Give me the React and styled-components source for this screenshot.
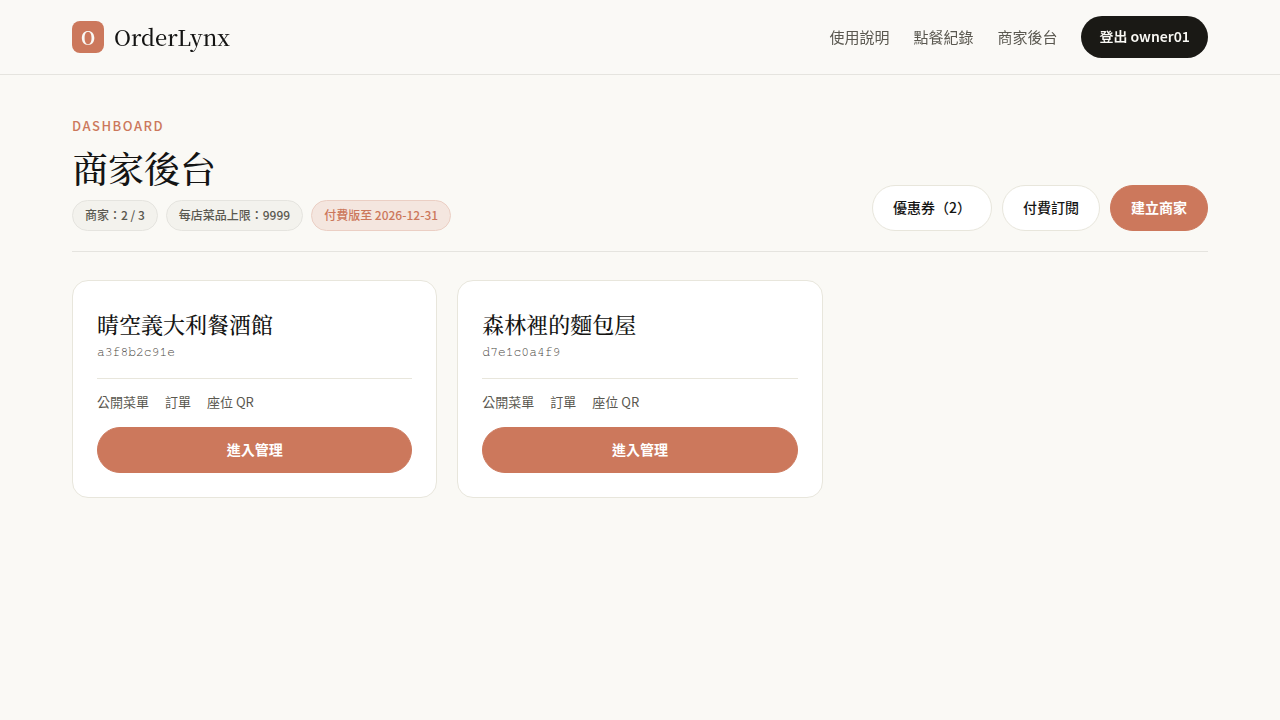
import React from "react";
import styled, { createGlobalStyle, css } from "styled-components";

const sans = `"Noto Sans CJK TC", sans-serif`;
const serif = `"Noto Serif CJK TC", serif`;
const mono = `FreeMono, "Liberation Mono", monospace`;

const GlobalStyle = createGlobalStyle`
  * {
    box-sizing: border-box;
  }

  body {
    margin: 0;
    background: #faf9f5;
    color: #141413;
    font-family: ${sans};
    font-size: 16px;
    line-height: 26px;
  }

  a {
    color: inherit;
    text-decoration: none;
  }
`;

const Header = styled.header`
  position: sticky;
  top: 0;
  z-index: 10;
  background: rgba(250, 249, 245, 0.92);
  backdrop-filter: blur(12px);
  border-bottom: 1px solid #e5e4df;
`;

const HeaderInner = styled.div`
  display: flex;
  align-items: center;
  justify-content: space-between;
  max-width: 1200px;
  margin: 0 auto;
  padding: 16px 32px;
`;

const Brand = styled.a`
  display: flex;
  align-items: center;
  gap: 10px;
  font-family: ${serif};
  font-size: 22px;
  font-weight: 500;
`;

const BrandMark = styled.span`
  display: flex;
  align-items: center;
  justify-content: center;
  width: 32px;
  height: 32px;
  border-radius: 8px;
  background: #cc785c;
  color: #faf9f5;
  font-size: 18px;
  font-weight: 700;
`;

const Nav = styled.nav`
  display: flex;
  align-items: center;
  gap: 24px;
`;

const NavLink = styled.a`
  color: #5a5850;
  font-size: 15px;

  &:hover {
    color: #141413;
  }
`;

const pillShape = css`
  border-radius: 999px;
  font-family: inherit;
  font-size: 14px;
  line-height: 21px;
  cursor: pointer;
`;

const LogoutButton = styled.button`
  ${pillShape}
  padding: 10px 18px 11px;
  border: none;
  background: #1a1915;
  color: #faf9f5;
  font-family: "Noto Sans TC", ${sans};
  font-weight: 600;
`;

const Button = styled.button`
  ${pillShape}
  width: ${(props) => (props.$full ? "100%" : "auto")};
  padding: 11px 20px 12px;
  border: 1px solid ${(props) => (props.$primary ? "#cc785c" : "#e8e6dc")};
  background: ${(props) => (props.$primary ? "#cc785c" : "#ffffff")};
  color: ${(props) => (props.$primary ? "#ffffff" : "#141413")};
  font-weight: ${(props) => (props.$primary ? 600 : 500)};
`;

const Main = styled.main`
  max-width: 1200px;
  margin: 0 auto;
  padding: 40px 32px;
`;

const PageHead = styled.section`
  display: flex;
  align-items: flex-end;
  justify-content: space-between;
  flex-wrap: wrap;
  gap: 20px;
  padding-bottom: 20px;
  margin-bottom: 28px;
  border-bottom: 1px solid #e5e4df;
`;

const Eyebrow = styled.div`
  margin-bottom: 10px;
  color: #cc785c;
  font-size: 13px;
  font-weight: 500;
  line-height: 22px;
  letter-spacing: 1.5px;
`;

const Title = styled.h1`
  margin: 0 0 12px;
  font-family: ${serif};
  font-size: 36px;
  font-weight: 500;
  line-height: 41px;
`;

const Tags = styled.div`
  display: flex;
  flex-wrap: wrap;
  gap: 8px;
`;

const Tag = styled.span`
  padding: 5px 12px 6px;
  border: 1px solid ${(props) => (props.$accent ? "#ebcfc4" : "#e5e4df")};
  border-radius: 999px;
  background: ${(props) => (props.$accent ? "#f4e6df" : "#f3f2ed")};
  color: ${(props) => (props.$accent ? "#cc785c" : "#5a5850")};
  font-size: 12px;
  font-weight: 500;
  line-height: 18px;
`;

const Actions = styled.div`
  display: flex;
  flex-wrap: wrap;
  gap: 10px;
`;

const Grid = styled.div`
  display: grid;
  grid-template-columns: repeat(auto-fill, minmax(300px, 1fr));
  gap: 20px;
`;

const Card = styled.article`
  padding: 24px;
  border: 1px solid #e8e6dc;
  border-radius: 16px;
  background: #ffffff;
`;

const CardTitle = styled.h2`
  margin: 0;
  font-family: ${serif};
  font-size: 22px;
  font-weight: 500;
  line-height: 38px;
`;

const Slug = styled.div`
  color: #4a4842;
  font-family: ${mono};
  font-size: 13px;
  line-height: 20px;
`;

const CardLinks = styled.div`
  display: flex;
  flex-wrap: wrap;
  gap: 16px;
  margin: 15px 0 14px;
  padding-top: 12px;
  border-top: 1px solid #e8e6dc;
  color: #5a5850;
  font-size: 13px;
  line-height: 22px;
`;

const stores = [
  { slug: "a3f8b2c91e", name: "晴空義大利餐酒館" },
  { slug: "d7e1c0a4f9", name: "森林裡的麵包屋" },
];

const StoreCard = ({ store }) => (
  <Card>
    <CardTitle>{store.name}</CardTitle>
    <Slug>{store.slug}</Slug>
    <CardLinks>
      <a href="#menu">公開菜單</a>
      <a href="#orders">訂單</a>
      <a href="#seats">座位 QR</a>
    </CardLinks>
    <Button type="button" $primary $full>
      進入管理
    </Button>
  </Card>
);

const App = () => {
  return (
    <>
      <GlobalStyle />
      <Header>
        <HeaderInner>
          <Brand href="#home">
            <BrandMark>O</BrandMark>
            <span>OrderLynx</span>
          </Brand>
          <Nav>
            <NavLink href="#guide">使用說明</NavLink>
            <NavLink href="#history">點餐紀錄</NavLink>
            <NavLink href="#dashboard">商家後台</NavLink>
            <LogoutButton type="button">登出 owner01</LogoutButton>
          </Nav>
        </HeaderInner>
      </Header>

      <Main>
        <PageHead>
          <div>
            <Eyebrow>DASHBOARD</Eyebrow>
            <Title>商家後台</Title>
            <Tags>
              <Tag>商家：2 / 3</Tag>
              <Tag>每店菜品上限：9999</Tag>
              <Tag $accent>付費版至 2026-12-31</Tag>
            </Tags>
          </div>
          <Actions>
            <Button type="button">優惠券（2）</Button>
            <Button type="button">付費訂閱</Button>
            <Button type="button" $primary>
              建立商家
            </Button>
          </Actions>
        </PageHead>

        <Grid>
          {stores.map((store) => (
            <StoreCard key={store.slug} store={store} />
          ))}
        </Grid>
      </Main>
    </>
  );
};

export default App;
